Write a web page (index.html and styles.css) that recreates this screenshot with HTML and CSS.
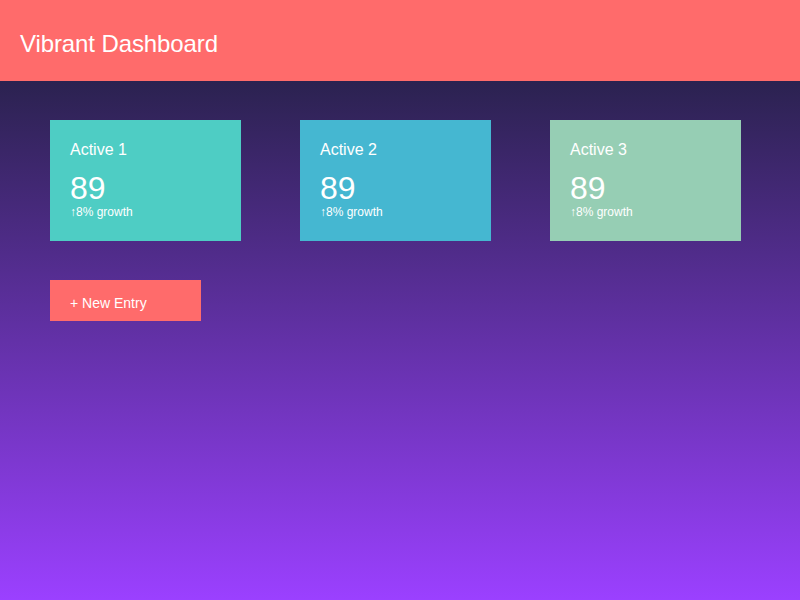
FILE: index.html
```html
<!DOCTYPE html>
<html lang="en">
<head>
<meta charset="utf-8">
<title>Vibrant Dashboard</title>
<link rel="stylesheet" href="styles.css">
</head>
<body>
<header class="topbar">
  <h1 class="title">Vibrant Dashboard</h1>
</header>
<main class="content">
  <section class="cards">
    <div class="card card-teal">
      <h3 class="card-label">Active 1</h3>
      <div class="card-value">89</div>
      <div class="card-growth">↑8% growth</div>
    </div>
    <div class="card card-blue">
      <h3 class="card-label">Active 2</h3>
      <div class="card-value">89</div>
      <div class="card-growth">↑8% growth</div>
    </div>
    <div class="card card-sage">
      <h3 class="card-label">Active 3</h3>
      <div class="card-value">89</div>
      <div class="card-growth">↑8% growth</div>
    </div>
  </section>
  <button class="new-entry">+ New Entry</button>
</main>
</body>
</html>
```
FILE: styles.css
```css
html, body {
  margin: 0;
  padding: 0;
  height: 100%;
}
body {
  font-family: "Liberation Sans", Arial, sans-serif;
  color: #ffffff;
  display: flex;
  flex-direction: column;
  background: #2b2250;
}
.topbar {
  height: 81px;
  box-sizing: border-box;
  background: #ff6b6b;
  display: flex;
  align-items: center;
  padding: 6px 20px 0;
  flex: none;
}
.title {
  margin: 0;
  font-size: 24px;
  font-weight: normal;
  letter-spacing: -0.1px;
  color: #ffffff;
}
.content {
  flex: 1;
  background: linear-gradient(to bottom, #2b2250, #9b40ff);
  padding: 39px 50px 0;
}
.cards {
  display: flex;
  gap: 59px;
}
.card {
  width: 191px;
  height: 121px;
  box-sizing: border-box;
  padding: 21px 20px 0;
}
.card-teal { background: #4ecdc4; }
.card-blue { background: #45b7d1; }
.card-sage { background: #96ceb4; }
.card-label {
  margin: 0 0 13px;
  font-size: 16px;
  font-weight: normal;
  line-height: 18px;
}
.card-value {
  font-size: 32px;
  line-height: 32px;
}
.card-growth {
  font-size: 12px;
  line-height: 14px;
  margin-top: 1px;
}
.new-entry {
  margin-top: 39px;
  width: 151px;
  height: 41px;
  border: 0;
  background: #ff6b6b;
  color: #ffffff;
  font-family: "Liberation Sans", Arial, sans-serif;
  font-size: 14px;
  text-align: left;
  padding: 4px 20px 0;
  cursor: pointer;
  display: block;
}
```
